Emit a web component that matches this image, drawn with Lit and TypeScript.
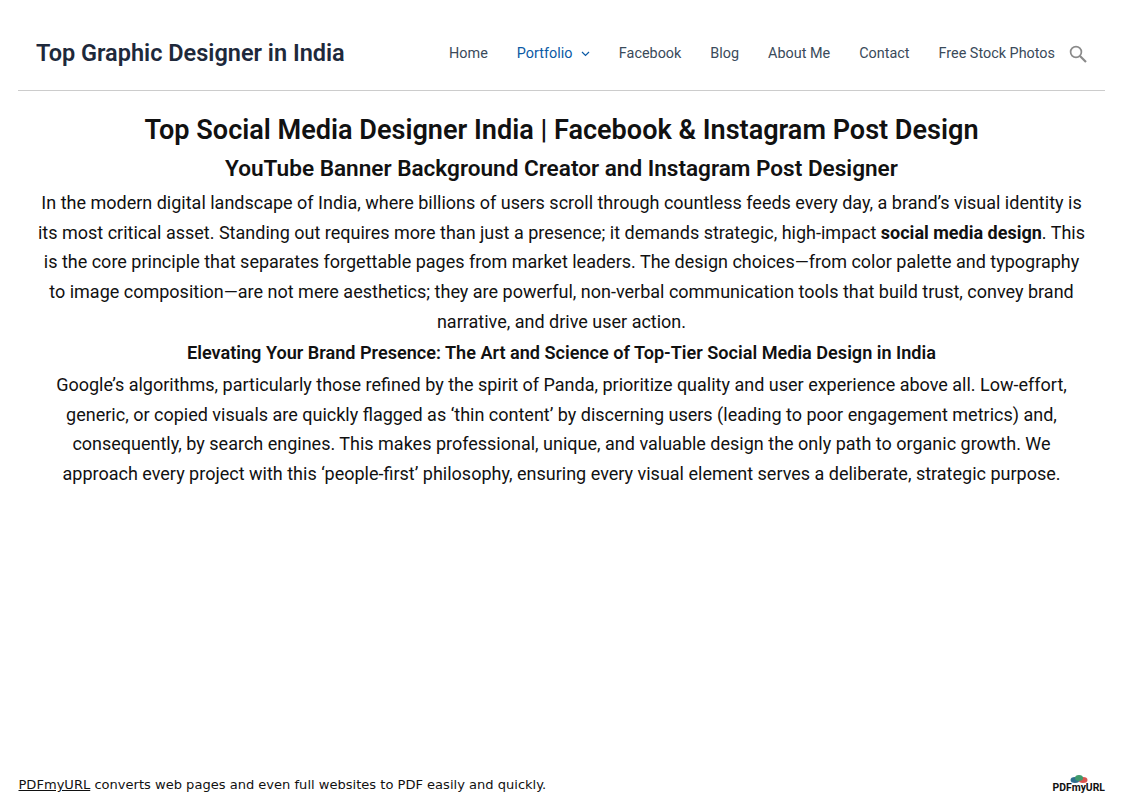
import { LitElement, html, css } from "lit";
import { customElement } from "lit/decorators.js";

const NAV = ["Home", "Portfolio", "Facebook", "Blog", "About Me", "Contact", "Free Stock Photos"];

@customElement("app-root")
export class AppRoot extends LitElement {
  static styles = css`
    :host { display: flex; flex-direction: column; height: 795px; font-family: Roboto, sans-serif; color: #111; background: #fff; overflow: hidden; }
    .page { padding: 0 19px 0 18px; flex: 1; }
    header { display: flex; align-items: center; justify-content: space-between; border-bottom: 1px solid #ccc; padding: 27px 18px 9px; height: 54px; }
    .brand { font-size: 23.5px; font-weight: 600; color: #1e293b; line-height: 1; }
    nav { display: flex; align-items: center; gap: 29px; font-size: 14.4px; color: #3a4a5a; margin-top: -1px; }
    nav a.active { color: #0b5aa5; display: flex; align-items: center; gap: 8.5px; }
    .search { width: 18px; height: 18px; margin-left: -15px; display: block; }
    main { text-align: center; }
    h1 { font-size: 27.07px; font-weight: 600; margin: 0; line-height: 35px; padding: 22px 0 4px; color: #111; }
    h2 { font-size: 22.57px; font-weight: 600; margin: 0; line-height: 34px; padding-bottom: 2px; }
    h3 { font-size: 18.1px; font-weight: 600; margin: 0; line-height: 32px; padding-bottom: 1.3px; }
    p { font-size: 18px; line-height: 29.7px; margin: 0; padding: 0 18px; }
    b { font-weight: 700; }
    footer { display: flex; justify-content: space-between; align-items: flex-end; padding: 0 19px 0 18.5px; height: 29px; font-family: "DejaVu Sans", sans-serif; font-size: 13.06px; color: #111; }
    footer a { color: #111; text-decoration: underline; }
    .note { padding-bottom: 3px; }
    .logo { display: flex; flex-direction: column; align-items: center; font-family: Roboto, sans-serif; font-weight: 700; font-size: 10.4px; line-height: 10px; color: #111; padding-bottom: 2px; }
    .logo svg { display: block; }
  `;
  render() {
    return html`
      <div class="page">
        <header>
          <div class="brand">Top Graphic Designer in India</div>
          <nav>
            ${NAV.map((n) => n === "Portfolio"
              ? html`<a class="active">${n}<svg width="9" height="6" viewBox="0 0 9 6"><path d="M1 1l3.5 3.5L8 1" fill="none" stroke="#0b5aa5" stroke-width="1.2"/></svg></a>`
              : html`<a>${n}</a>`)}
            <svg class="search" viewBox="0 0 18 18"><circle cx="7" cy="7" r="5.4" fill="none" stroke="#8a8a8a" stroke-width="1.7"/><path d="M11 11l6 6" stroke="#8a8a8a" stroke-width="2.2"/></svg>
          </nav>
        </header>
        <main>
          <h1>Top Social Media Designer India | Facebook &amp; Instagram Post Design</h1>
          <h2>YouTube Banner Background Creator and Instagram Post Designer</h2>
          <p>In the modern digital landscape of India, where billions of users scroll through countless feeds every day, a brand’s visual identity is its most critical asset. Standing out requires more than just a presence; it demands strategic, high-impact <b>social media design</b>. This is the core principle that separates forgettable pages from market leaders. The design choices—from color palette and typography to image composition—are not mere aesthetics; they are powerful, non-verbal communication tools that build trust, convey brand narrative, and drive user action.</p>
          <h3>Elevating Your Brand Presence: The Art and Science of Top-Tier Social Media Design in India</h3>
          <p>Google’s algorithms, particularly those refined by the spirit of Panda, prioritize quality and user experience above all. Low-effort, generic, or copied visuals are quickly flagged as ‘thin content’ by discerning users (leading to poor engagement metrics) and, consequently, by search engines. This makes professional, unique, and valuable design the only path to organic growth. We approach every project with this ‘people-first’ philosophy, ensuring every visual element serves a deliberate, strategic purpose.</p>
        </main>
      </div>
      <footer>
        <span class="note"><a>PDFmyURL</a> converts web pages and even full websites to PDF easily and quickly.</span>
        <span class="logo">
          <svg width="18" height="8" viewBox="0 0 18 8"><ellipse cx="5" cy="5" rx="4.5" ry="3" fill="#2f6f8f"/><ellipse cx="13" cy="5" rx="4.5" ry="3" fill="#d9534f"/><ellipse cx="9" cy="3" rx="4" ry="3" fill="#3f9a6b"/></svg>
          PDFmyURL
        </span>
      </footer>
    `;
  }
}
